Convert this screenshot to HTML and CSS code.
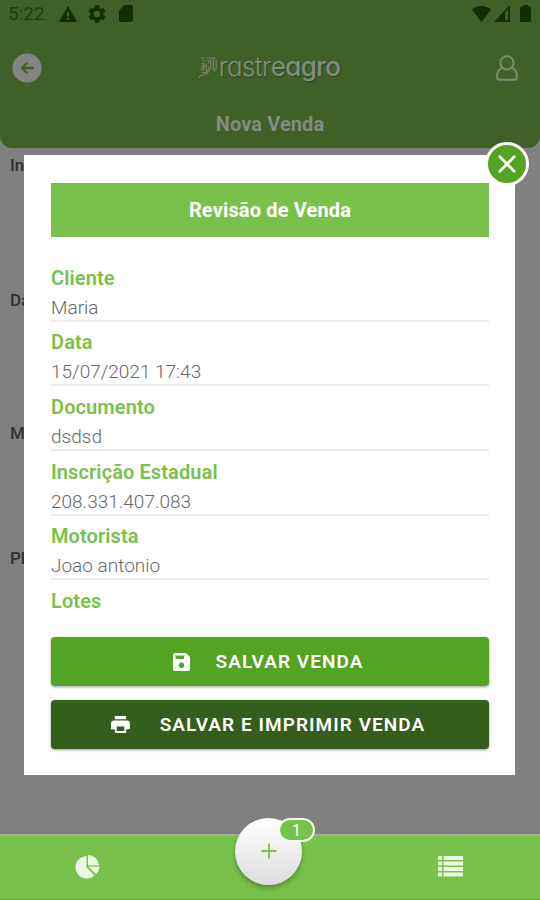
FILE: index.html
```html
<!DOCTYPE html>
<html lang="pt-BR">
<head>
    <meta charset="UTF-8">
    <meta name="viewport" content="width=device-width, initial-scale=1.0">
    <title>Rastreagro</title>
    <link rel="stylesheet" href="styles.css">
</head>
<body>
    <header class="header">
        <div class="status-bar">
            <span class="clock">5:22</span>
            <svg class="warn" width="18" height="16" viewBox="0 0 18 16"><path fill-rule="evenodd" d="M9 0l9 16H0zM8 6v4.500h2V6zM8 12v2h2v-2z"/></svg>
            <svg class="gear" width="18" height="18" viewBox="2 2 20 20"><path d="M19.140 12.940c.040-.300.060-.610.060-.940s-.020-.640-.070-.940l2.030-1.580a.5.5 0 0 0 .120-.610l-1.920-3.320a.5.5 0 0 0-.590-.220l-2.390.960c-.500-.380-1.030-.700-1.620-.940l-.360-2.540A.5.5 0 0 0 13.920 2.400h-3.840a.5.5 0 0 0-.470.410l-.360 2.540c-.590.240-1.130.570-1.620.940l-2.390-.960a.5.5 0 0 0-.590.220L2.740 8.870a.5.5 0 0 0 .120.610l2.030 1.580c-.050.300-.090.630-.090.940s.020.640.070.940l-2.030 1.580a.5.5 0 0 0-.120.610l1.920 3.320c.120.220.370.290.590.220l2.390-.960c.500.380 1.030.700 1.620.940l.360 2.540c.050.240.240.410.480.410h3.840c.240 0 .440-.170.470-.410l.360-2.540c.590-.240 1.130-.560 1.620-.940l2.390.960c.220.080.470 0 .590-.220l1.920-3.320a.5.5 0 0 0-.120-.610zM12 15.600A3.600 3.600 0 1 1 12 8.400a3.600 3.600 0 0 1 0 7.200z"/></svg>
            <svg width="14" height="17" viewBox="0 0 14 17"><path fill-rule="evenodd" d="M5.500 0H12a2 2 0 0 1 2 2v13a2 2 0 0 1-2 2H2a2 2 0 0 1-2-2V5.500z"/></svg>
            <svg class="wifi" width="19" height="16" viewBox="0 0 19 16"><path d="M0 3.600C5.500-1.200 13.500-1.200 19 3.600L9.500 16z"/></svg>
            <svg class="signal" width="16" height="17" viewBox="0 0 16 17"><path fill-rule="evenodd" d="M16 0v17H0zM14.300 4L11 7.600v7.700h3.300z"/></svg>
            <svg width="11" height="17" viewBox="0 0 11 17"><path d="M3 0h5v1.500h1.500A1.500 1.500 0 0 1 11 3v12.500a1.500 1.500 0 0 1-1.500 1.500h-8A1.500 1.500 0 0 1 0 15.500V3a1.500 1.500 0 0 1 1.500-1.500H3z"/></svg>
        </div>
        <div class="nav">
            <svg width="30" height="30" viewBox="0 0 30 30"><circle cx="15" cy="15" r="14.500" fill="#848484"/><path d="M14.500 10.500L10 15l4.500 4.500M10.500 15h10.500" fill="none" stroke="#3f6128" stroke-width="2.400" stroke-linecap="round" stroke-linejoin="round"/></svg>
            <div class="logo">
                <svg width="20" height="25" viewBox="0 0 22 25" fill="none" stroke="#7b8077" stroke-width="1.200"><path d="M3 2h4M9 2h10M5 5h3M10 5h2v3M14 4v11M4 8h2v3h3V8M3 12h3v3H3M9 12v4h3v-5M4 18h5l3-2M3 21c3 0 6-1 9-4M1 24l2-3M17 3v12M20 4v10l-3 3"/></svg>
                <span class="logo-text">rastr<b class="mid">e</b><b>agro</b></span>
            </div>
            <svg width="22" height="26" viewBox="0 0 22 26" fill="none" stroke="#7b8b72" stroke-width="2"><circle cx="11" cy="7.800" r="6.600"/><path d="M6 12.800C2.500 14.500 1.200 17 1.200 20v2.500A2.300 2.300 0 0 0 3.500 24.800h15a2.300 2.300 0 0 0 2.300-2.300V20c0-3-1.300-5.500-4.800-7.200"/></svg>
        </div>
        <h1 class="page-title">Nova Venda</h1>
    </header>

    <main class="form">
        <label class="form-label">In</label>
        <label class="form-label">Da</label>
        <label class="form-label">M</label>
        <label class="form-label">Pl</label>
    </main>

    <footer class="tab-bar">
        <svg class="tab-pie" width="25" height="24" viewBox="0 0 25 24" fill="#edf6e3"><path d="M11.500 1v11.500l8 8A11.300 11.300 0 1 1 11.500 1z"/><path d="M13 0A11 11 0 0 1 24 10.500H13z"/><path d="M13.500 11.700H24.500a11 11 0 0 1-3.500 7.500z"/></svg>
        <svg class="tab-list" width="25" height="21" viewBox="0 0 25 21" fill="#edf6e3"><path d="M0 0h4v4H0zM5.500 0H25v4H5.500zM0 5.500h4v4H0zM5.500 5.500H25v4H5.500zM0 11h4v4H0zM5.500 11H25v4H5.500zM0 16.500h4v4H0zM5.500 16.500H25v4H5.500z"/></svg>
        <div class="fab">
            <svg width="16" height="16" viewBox="0 0 16 16"><path d="M8 .5v15M.5 8h15" stroke="#78c24b" stroke-width="1.800"/></svg>
            <span class="badge">1</span>
        </div>
    </footer>

    <section class="modal">
        <div class="modal-close">
            <svg width="18" height="18" viewBox="0 0 20 20"><path d="M2 2l16 16M18 2L2 18" stroke="#fff" stroke-width="3" stroke-linecap="round"/></svg>
        </div>
        <h2 class="modal-title">Revisão de Venda</h2>
        <dl class="fields">
            <div class="field"><dt>Cliente</dt><dd>Maria</dd></div>
            <div class="field"><dt>Data</dt><dd>15/07/2021 17:43</dd></div>
            <div class="field"><dt>Documento</dt><dd>dsdsd</dd></div>
            <div class="field"><dt>Inscrição Estadual</dt><dd>208.331.407.083</dd></div>
            <div class="field"><dt>Motorista</dt><dd>Joao antonio</dd></div>
            <div class="field last"><dt>Lotes</dt></div>
        </dl>
        <button class="btn btn-save">
            <svg width="17" height="18" viewBox="0 0 17 18"><path fill-rule="evenodd" d="M2 0h11l4 4v12a2 2 0 0 1-2 2H2a2 2 0 0 1-2-2V2a2 2 0 0 1 2-2zM2.500 2.500v3.500h8.500V2.500zM8.500 9.500a2.800 2.800 0 1 0 .01 0z"/></svg>
            <span>SALVAR VENDA</span>
        </button>
        <button class="btn btn-print">
            <svg width="19" height="17" viewBox="0 0 20 18"><path fill-rule="evenodd" d="M4 0h12v3.500H4zM3 4.700h14a3 3 0 0 1 3 3V14h-4v4H4v-4H0V7.700a3 3 0 0 1 3-3zM6 11v5h8v-5z"/></svg>
            <span>SALVAR E IMPRIMIR VENDA</span>
        </button>
    </section>
</body>
</html>
```

FILE: styles.css
```css
* {
    box-sizing: border-box;
}

body {
    font-family: Roboto, 'Liberation Sans', sans-serif;
    margin: 0;
    position: relative;
    display: flex;
    flex-direction: column;
    width: 540px;
    height: 900px;
    overflow: hidden;
    background-color: #808080;
}

.header {
    height: 148px;
    flex-shrink: 0;
    background-color: #3f6128;
    border-radius: 0 0 12px 12px;
}

.status-bar {
    display: flex;
    align-items: center;
    height: 27px;
    padding: 0 9px 0 8px;
    fill: #142b04;
}

.clock {
    width: 51px;
    font-size: 19px;
    color: #203c10;
}

.warn {
    margin-right: 11px;
}

.gear {
    margin-right: 13px;
}

.wifi {
    margin-left: auto;
    margin-right: 3px;
}

.signal {
    margin-right: 10px;
}

.nav {
    display: flex;
    align-items: center;
    justify-content: space-between;
    height: 82px;
    padding: 0 22px 0 12px;
}

.logo {
    display: flex;
    align-items: center;
    gap: 1px;
    margin-bottom: 2px;
}

.logo-text {
    font-family: Inter, Lato, sans-serif;
    font-feature-settings: 'cv11' 1, 'ss01' 0;
    font-size: 26px;
    font-weight: 300;
    line-height: 26px;
    letter-spacing: -0.600px;
    color: #858a82;
    text-shadow: 1px 1px 1px #2b431b;
}

.logo-text b {
    font-weight: 500;
}

.logo-text .mid {
    font-weight: 400;
}

.page-title {
    margin: 3px 0 0;
    font-size: 20px;
    line-height: 24px;
    letter-spacing: 0.100px;
    text-align: center;
    color: #858a82;
}

.form {
    display: flex;
    flex-direction: column;
    flex: 1;
    gap: 112px;
    padding: 7px 10px;
}

.form-label {
    height: 20px;
    font-size: 17px;
    line-height: 20px;
    font-weight: 500;
    color: #303030;
}

.form-label:nth-child(2) {
    margin-top: 3px;
}

.form-label:nth-child(3) {
    margin-top: 1px;
}

.form-label:nth-child(4) {
    margin-top: -7px;
}

.tab-bar {
    position: relative;
    display: flex;
    align-items: center;
    justify-content: space-between;
    height: 66px;
    padding: 0 77px 2px 75px;
    background-color: #78c24b;
    border-top: 2px solid #a0b094;
    border-bottom: 1px solid #5f9f3a;
}

.fab {
    position: absolute;
    left: 235px;
    top: -18px;
    display: flex;
    align-items: center;
    justify-content: center;
    width: 67px;
    height: 67px;
    padding-bottom: 2px;
    border-radius: 50%;
    background: linear-gradient(#ffffff, #dcdcdc);
    box-shadow: 0 3px 5px rgba(0, 0, 0, 0.3);
}

.badge {
    position: absolute;
    top: 0;
    left: 43px;
    width: 37px;
    height: 24px;
    border: 2px solid #f5faf1;
    border-radius: 12px;
    background-color: #78c24b;
    color: #fff;
    font-size: 16px;
    line-height: 21px;
    text-align: center;
}

.modal {
    position: absolute;
    left: 24px;
    top: 155px;
    display: flex;
    flex-direction: column;
    width: 491px;
    height: 620px;
    padding: 28px 26px 26px 27px;
    background-color: #fff;
}

.modal-close {
    position: absolute;
    top: -13px;
    right: -14px;
    display: flex;
    align-items: center;
    justify-content: center;
    width: 44px;
    height: 44px;
    border: 3px solid #fff;
    border-radius: 50%;
    background-color: #52a422;
}

.modal-title {
    height: 54px;
    margin: 0 0 26px;
    font-size: 20px;
    line-height: 55px;
    letter-spacing: 0.150px;
    text-align: center;
    color: #fff;
    background-color: #78c24b;
}

.fields {
    margin: 0;
}

.field {
    height: 64.700px;
    padding-top: 1.600px;
}

.field dt {
    font-size: 20px;
    line-height: 26px;
    font-weight: 600;
    letter-spacing: 0.100px;
    color: #78c24b;
}

.field dd {
    height: 31px;
    margin: 0;
    padding-top: 2px;
    font-size: 19px;
    line-height: 30px;
    font-weight: 300;
    color: #686868;
    border-bottom: 2px solid #ececec;
}

.field.last {
    height: 50.500px;
}

.btn {
    display: flex;
    align-items: center;
    justify-content: center;
    height: 49px;
    padding: 1px 4px 0 0;
    border: none;
    border-radius: 4px;
    font-family: inherit;
    font-size: 19px;
    font-weight: 600;
    letter-spacing: 1.050px;
    color: #fff;
    fill: #fff;
    box-shadow: 0 1px 3px rgba(0, 0, 0, 0.4);
}

.btn-save {
    gap: 26px;
    margin-bottom: 14px;
    background-color: #52a422;
}

.btn-print {
    gap: 30px;
    background-color: #355d1b;
}
```
